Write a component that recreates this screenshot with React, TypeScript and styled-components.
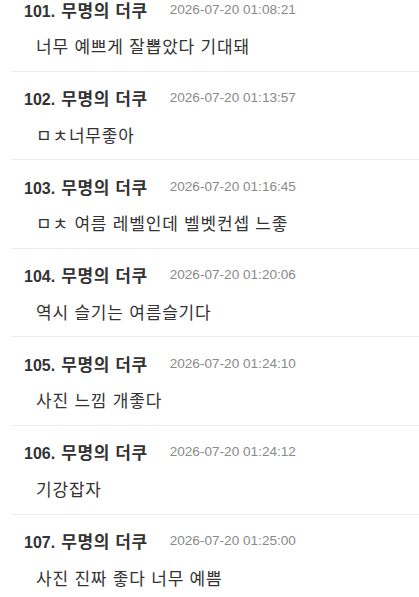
import React from "react";
import styled, { createGlobalStyle } from "styled-components";

const GlobalStyle = createGlobalStyle`
  html, body {
    margin: 0;
    padding: 0;
    background: #ffffff;
    overflow: hidden;
  }
  body {
    font-family: "Liberation Sans", "Noto Sans CJK KR", sans-serif;
    color: #333;
  }
`;

type Comment = {
  no: number;
  author: string;
  time: string;
  text: string;
};

const comments: Comment[] = [
  { no: 101, author: "무명의 더쿠", time: "2026-07-20 01:08:21", text: "너무 예쁘게 잘뽑았다 기대돼" },
  { no: 102, author: "무명의 더쿠", time: "2026-07-20 01:13:57", text: "ㅁㅊ너무좋아" },
  { no: 103, author: "무명의 더쿠", time: "2026-07-20 01:16:45", text: "ㅁㅊ 여름 레벨인데 벨벳컨셉 느좋" },
  { no: 104, author: "무명의 더쿠", time: "2026-07-20 01:20:06", text: "역시 슬기는 여름슬기다" },
  { no: 105, author: "무명의 더쿠", time: "2026-07-20 01:24:10", text: "사진 느낌 개좋다" },
  { no: 106, author: "무명의 더쿠", time: "2026-07-20 01:24:12", text: "기강잡자" },
  { no: 107, author: "무명의 더쿠", time: "2026-07-20 01:25:00", text: "사진 진짜 좋다 너무 예쁨" },
];

const CommentList = styled.ul`
  list-style: none;
  margin: -17px 0 0 12px;
  padding: 0;
`;

const CommentItem = styled.li<{ $last?: boolean }>`
  display: flex;
  flex-direction: column;
  gap: 15px;
  padding: 14px 0 10.6px 12px;
  border-bottom: ${(p) => (p.$last ? "none" : "1px solid #ebebeb")};
`;

const Header = styled.div`
  display: flex;
  align-items: center;
  height: 24px;
  gap: 22px;
`;

const Author = styled.strong`
  display: flex;
  align-items: baseline;
  font-size: 16px;
  font-weight: 700;
  color: #333;
  white-space: nowrap;
`;

const Number = styled.span`
  margin-right: 6px;
`;

const Nick = styled.span`
  font-size: 17px;
  letter-spacing: 0.6px;
`;

const Time = styled.span`
  font-size: 13.6px;
  color: #8a8a8a;
  white-space: nowrap;
`;

const Body = styled.p`
  margin: 0;
  padding-left: 12px;
  height: 24px;
  line-height: 24px;
  font-size: 17px;
  letter-spacing: 0.8px;
  color: #333;
  white-space: nowrap;
`;

export default function App() {
  return (
    <>
      <GlobalStyle />
      <CommentList>
        {comments.map((c, i) => (
          <CommentItem key={c.no} $last={i === comments.length - 1}>
            <Header>
              <Author>
                <Number>{c.no}.</Number>
                <Nick>{c.author}</Nick>
              </Author>
              <Time>{c.time}</Time>
            </Header>
            <Body>{c.text}</Body>
          </CommentItem>
        ))}
      </CommentList>
    </>
  );
}
